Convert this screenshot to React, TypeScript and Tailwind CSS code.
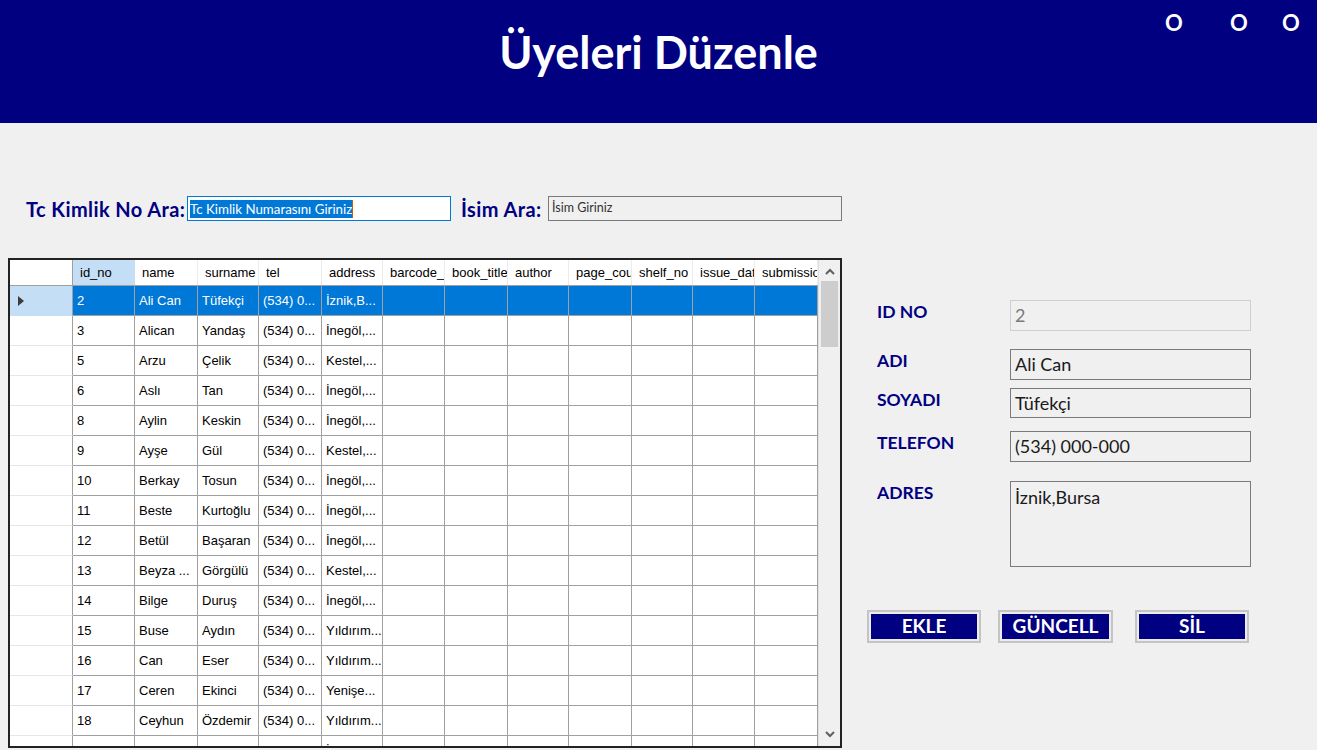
import React from "react";

const cols = [
  { key: "id_no", w: 62 },
  { key: "name", w: 63 },
  { key: "surname", w: 61 },
  { key: "tel", w: 63 },
  { key: "address", w: 61 },
  { key: "barcode_no", w: 62 },
  { key: "book_title", w: 63 },
  { key: "author", w: 61 },
  { key: "page_count", w: 63 },
  { key: "shelf_no", w: 61 },
  { key: "issue_date", w: 62 },
  { key: "submission_date", w: 63 },
];

const rows: string[][] = [
  ["2", "Ali Can", "Tüfekçi", "(534) 0...", "İznik,B..."],
  ["3", "Alican", "Yandaş", "(534) 0...", "İnegöl,..."],
  ["5", "Arzu", "Çelik", "(534) 0...", "Kestel,..."],
  ["6", "Aslı", "Tan", "(534) 0...", "İnegöl,..."],
  ["8", "Aylin", "Keskin", "(534) 0...", "İnegöl,..."],
  ["9", "Ayşe", "Gül", "(534) 0...", "Kestel,..."],
  ["10", "Berkay", "Tosun", "(534) 0...", "İnegöl,..."],
  ["11", "Beste", "Kurtoğlu", "(534) 0...", "İnegöl,..."],
  ["12", "Betül", "Başaran", "(534) 0...", "İnegöl,..."],
  ["13", "Beyza ...", "Görgülü", "(534) 0...", "Kestel,..."],
  ["14", "Bilge", "Duruş", "(534) 0...", "İnegöl,..."],
  ["15", "Buse", "Aydın", "(534) 0...", "Yıldırım..."],
  ["16", "Can", "Eser", "(534) 0...", "Yıldırım..."],
  ["17", "Ceren", "Ekinci", "(534) 0...", "Yenişe..."],
  ["18", "Ceyhun", "Özdemir", "(534) 0...", "Yıldırım..."],
  ["19", "Çağla", "Akın", "(534) 0...", "İnegöl,..."],
];

const gothic = { fontFamily: "Lato, 'DejaVu Sans', sans-serif" };
const gridFont = { fontFamily: "'Liberation Sans', Arial, sans-serif" };

function DataGrid() {
  return (
    <div
      className="relative flex h-[490px] w-[834px] shrink-0 border-2 border-[#222] bg-white"
      style={gridFont}
    >
      <div className="flex h-full w-[808px] flex-col overflow-hidden">
        <div className="flex h-[26px] shrink-0 border-b border-[#a0a0a0] bg-white text-[13px] text-black">
          <div className="h-full w-[63px] shrink-0 border-r border-[#a0a0a0] bg-white" />
          {cols.map((c, i) => (
            <div
              key={c.key}
              className={
                "flex h-full shrink-0 items-center overflow-hidden whitespace-nowrap border-r pl-[7px] " +
                (i === 0 ? "border-[#c4dff5] bg-[#c4dff5]" : "border-[#ececec] bg-white")
              }
              style={{ width: c.w }}
            >
              <span className="block overflow-hidden">{c.key}</span>
            </div>
          ))}
        </div>
        {rows.map((r, ri) => {
          const sel = ri === 0;
          return (
            <div key={ri} className="flex h-[30px] shrink-0 text-[13px]">
              <div
                className={
                  "flex h-full w-[63px] shrink-0 items-center border-r border-b border-r-[#a0a0a0] pl-[8px] " +
                  (sel ? "border-b-[#c4dff5] bg-[#c4dff5]" : "border-b-[#e6e6e6] bg-white")
                }
              >
                {sel && (
                  <svg width="6" height="10" viewBox="0 0 6 10">
                    <path d="M0 0 L6 5 L0 10 Z" fill="#3c3c3c" />
                  </svg>
                )}
              </div>
              {cols.map((c, ci) => (
                <div
                  key={c.key}
                  className={
                    "flex h-full shrink-0 items-center overflow-hidden whitespace-nowrap border-r border-b border-[#a0a0a0] pl-[4px] " +
                    (sel ? "bg-[#0078d7] text-white" : "bg-white text-black")
                  }
                  style={{ width: c.w }}
                >
                  {r[ci] ?? ""}
                </div>
              ))}
            </div>
          );
        })}
      </div>
      <div className="flex h-full w-[22px] shrink-0 flex-col items-center border-l border-[#e0e0e0] bg-[#f0f0f0]">
        <div className="flex h-[20px] w-full items-center justify-center pt-[2px]">
          <svg width="10" height="7" viewBox="0 0 10 7">
            <path d="M1 6 L5 2 L9 6" stroke="#606060" strokeWidth="2" fill="none" />
          </svg>
        </div>
        <div className="mt-[1px] h-[66px] w-[17px] bg-[#cdcdcd]" />
        <div className="flex-1" />
        <div className="flex h-[20px] w-full items-center justify-center pb-[4px]">
          <svg width="10" height="7" viewBox="0 0 10 7">
            <path d="M1 1 L5 5 L9 1" stroke="#606060" strokeWidth="2" fill="none" />
          </svg>
        </div>
      </div>
    </div>
  );
}

function Field({
  label,
  value,
  h,
  mt,
  disabled,
  multiline,
}: {
  label: string;
  value: string;
  h: number;
  mt: number;
  disabled?: boolean;
  multiline?: boolean;
}) {
  return (
    <div className="flex items-start" style={{ marginTop: mt }}>
      <div
        className="w-[143px] shrink-0 pl-[10px] text-[17.5px] font-bold leading-[24px] text-[#000080]"
        style={gothic}
      >
        {label}
      </div>
      <div
        className={
          "w-[241px] border bg-[#f0f0f0] px-[4px] text-[18px] " +
          (disabled ? "border-[#cfcfcf] text-[#7a7a7a]" : "border-[#7a7a7a] text-[#1a1a1a]") +
          (multiline ? " pt-[4px] leading-[22px]" : " flex items-center")
        }
        style={{ ...gothic, height: h }}
      >
        {value}
      </div>
    </div>
  );
}

function Btn({ label, w, ml }: { label: string; w: number; ml: number }) {
  return (
    <div
      className="flex h-[33px] shrink-0 border-2 border-[#c4c4c4] bg-[#ececec] p-[2px]"
      style={{ width: w, marginLeft: ml }}
    >
      <div
        className="flex flex-1 items-center justify-center bg-[#000080] text-[19px] font-bold text-white"
        style={gothic}
      >
        {label}
      </div>
    </div>
  );
}

export default function App() {
  return (
    <div className="flex h-[750px] w-[1317px] flex-col overflow-hidden bg-[#f0f0f0]">
      <div className="relative flex h-[123px] shrink-0 items-center justify-center bg-[#000080] pb-[17px]">
        <h1 className="text-[45px] font-bold text-white" style={gothic}>
          Üyeleri Düzenle
        </h1>
        <div
          className="absolute right-[19px] top-[6px] flex text-[22px] font-bold text-white"
          style={gothic}
        >
          <span className="w-[16px] text-center">O</span>
          <span className="ml-[49px] w-[16px] text-center">O</span>
          <span className="ml-[36px] w-[16px] text-center">O</span>
        </div>
      </div>

      <div className="mt-[73px] flex h-[25px] items-center pl-[26px]">
        <div
          className="w-[161px] whitespace-nowrap text-[20px] font-bold tracking-[0.4px] text-[#000080]"
          style={gothic}
        >
          Tc Kimlik No Ara:
        </div>
        <div className="flex h-[25px] w-[264px] items-center border border-[#0078d7] bg-white pl-[2px]">
          <span className="bg-[#0078d7] text-[13.3px] leading-[18px] text-white" style={gothic}>
            Tc Kimlik Numarasını Giriniz
          </span>
          <span className="h-[18px] w-[1px] bg-[#c06010]" />
        </div>
        <div
          className="ml-[10px] w-[87px] whitespace-nowrap text-[20px] font-bold tracking-[0.4px] text-[#000080]"
          style={gothic}
        >
          İsim Ara:
        </div>
        <div
          className="flex h-[25px] w-[294px] items-center border border-[#7a7a7a] bg-[#f0f0f0] pl-[3px] text-[12.5px] text-[#333]"
          style={gothic}
        >
          İsim Giriniz
        </div>
      </div>

      <div className="mt-[37px] flex items-start pl-[8px]">
        <DataGrid />
        <div className="ml-[25px] flex flex-col pt-[42px]">
          <Field label="ID NO" value="2" h={31} mt={0} disabled />
          <Field label="ADI" value="Ali Can" h={31} mt={18} />
          <Field label="SOYADI" value="Tüfekçi" h={30} mt={8} />
          <Field label="TELEFON" value="(534) 000-000" h={31} mt={13} />
          <Field label="ADRES" value="İznik,Bursa" h={86} mt={19} multiline />
          <div className="mt-[43px] flex">
            <Btn label="EKLE" w={114} ml={0} />
            <Btn label="GÜNCELL" w={115} ml={17} />
            <Btn label="SİL" w={114} ml={22} />
          </div>
        </div>
      </div>
    </div>
  );
}
